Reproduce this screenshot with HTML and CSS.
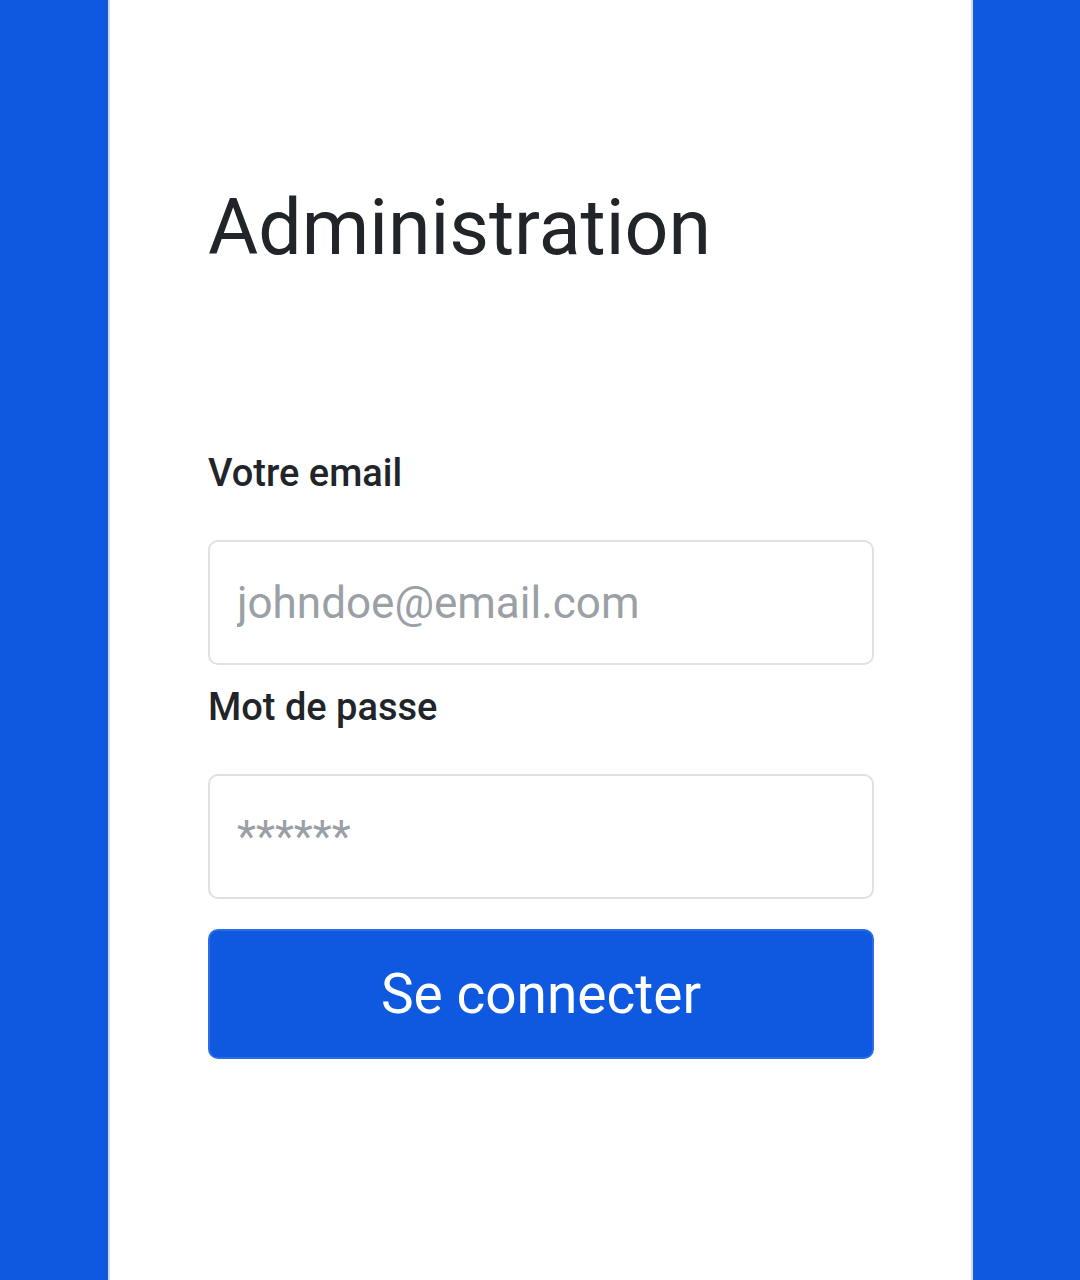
FILE: index.html
```html
<!DOCTYPE html>
<html lang="fr">
<head>
<meta charset="utf-8">
<title>Administration</title>
<link rel="stylesheet" href="styles.css">
</head>
<body>
<main class="panel">
  <h1 class="title">Administration</h1>
  <form class="login-form">
    <label class="field-label label-email" for="email">Votre email</label>
    <input class="field-input" id="email" type="email" placeholder="johndoe@email.com">
    <label class="field-label label-password" for="password">Mot de passe</label>
    <input class="field-input" id="password" type="password" placeholder="******">
    <button class="submit-btn" type="button">Se connecter</button>
  </form>
</main>
</body>
</html>
```
FILE: styles.css
```css
html, body {
  margin: 0;
  padding: 0;
  height: 100%;
}
body {
  background: #0f59e1;
  font-family: Roboto, "Liberation Sans", sans-serif;
  color: #212529;
}
.panel {
  box-sizing: border-box;
  margin-left: 107px;
  width: 867px;
  min-height: 1280px;
  background: #ffffff;
  border-left: 1px solid #2358b9;
  border-right: 1px solid #2358b9;
  box-shadow: inset 2px 0 0 #cbdaf3, inset -2px 0 0 #cbdaf3;
  padding: 182px 99px 0 100px;
}
.title {
  margin: 0;
  font-size: 77px;
  font-weight: 400;
  line-height: 1.2;
  color: #212529;
}
.login-form {
  display: flex;
  flex-direction: column;
  margin-top: 171px;
}
.field-label {
  font-size: 38px;
  font-weight: 500;
  line-height: 57px;
  color: #212529;
}
.label-password {
  margin-top: 14px;
}
.field-input {
  box-sizing: border-box;
  margin-top: 38px;
  height: 125px;
  width: 100%;
  border: 2px solid #dee2e6;
  border-radius: 10px;
  padding: 0 27px;
  font-family: Roboto, "Liberation Sans", sans-serif;
  font-size: 44px;
  color: #212529;
  background: #fff;
  outline: none;
}
.field-input::placeholder {
  color: #9aa0a6;
}
.submit-btn {
  box-sizing: border-box;
  margin-top: 30px;
  height: 130px;
  width: 100%;
  border: 2px solid #2a6de8;
  border-radius: 10px;
  background: #0f59e1;
  color: #ffffff;
  font-family: Roboto, "Liberation Sans", sans-serif;
  font-size: 55px;
  font-weight: 400;
  padding: 0;
  cursor: pointer;
}
```
